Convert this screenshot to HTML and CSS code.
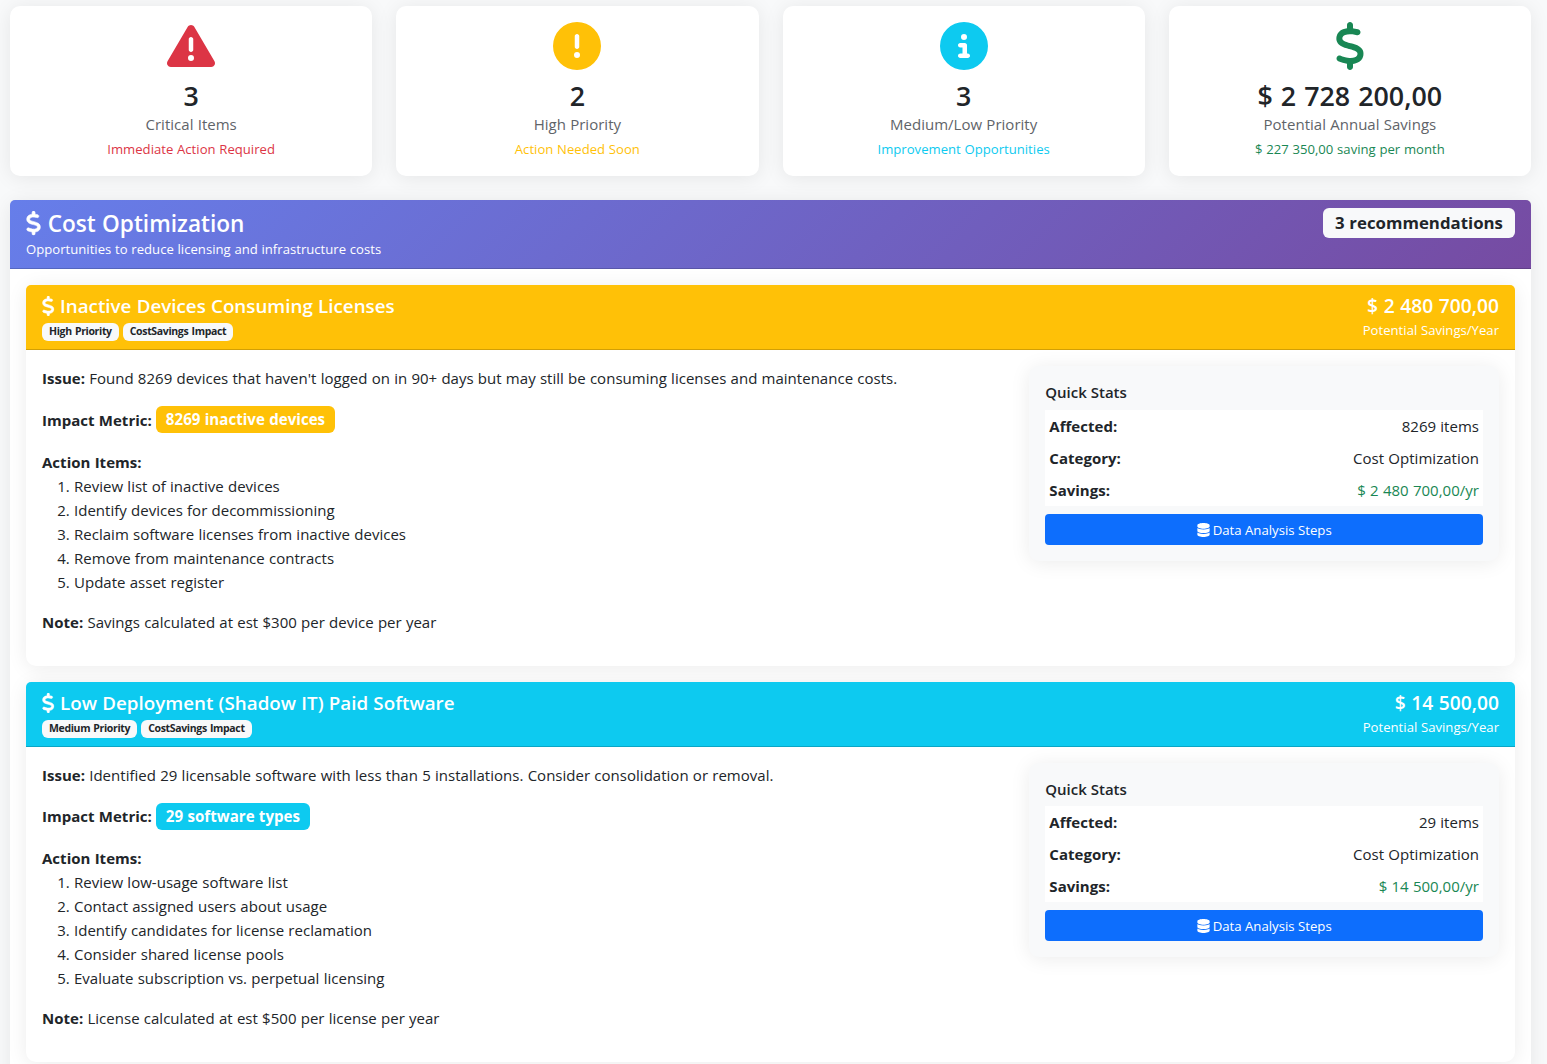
FILE: index.html
```html
<!DOCTYPE html>
<html lang="en">
<head>
    <meta charset="UTF-8">
    <meta name="viewport" content="width=device-width, initial-scale=1.0">
    <title>Recommendations</title>
    <link rel="stylesheet" href="styles.css">
</head>
<body>

<!-- Icons -->
<svg class="sprite" xmlns="http://www.w3.org/2000/svg">
    <symbol id="i-triangle" viewBox="0 0 512 512"><path d="M256 32c14.2 0 27.3 7.5 34.5 19.8l216 368c7.3 12.4 7.3 27.7 .2 40.1S486.3 480 472 480H40c-14.3 0-27.6-7.7-34.7-20.1s-7-27.8 .2-40.1l216-368C228.7 39.5 241.8 32 256 32zm0 128c-13.3 0-24 10.7-24 24V296c0 13.3 10.7 24 24 24s24-10.7 24-24V184c0-13.3-10.7-24-24-24zm32 224a32 32 0 1 0 -64 0 32 32 0 1 0 64 0z"/></symbol>
    <symbol id="i-exclamation" viewBox="0 0 512 512"><path d="M256 512A256 256 0 1 0 256 0a256 256 0 1 0 0 512zm0-384c13.3 0 24 10.7 24 24V264c0 13.3-10.7 24-24 24s-24-10.7-24-24V152c0-13.3 10.7-24 24-24zM224 352a32 32 0 1 1 64 0 32 32 0 1 1 -64 0z"/></symbol>
    <symbol id="i-info" viewBox="0 0 512 512"><path d="M256 512A256 256 0 1 0 256 0a256 256 0 1 0 0 512zM216 336h24V272H216c-13.3 0-24-10.7-24-24s10.7-24 24-24h48c13.3 0 24 10.7 24 24v88h8c13.3 0 24 10.7 24 24s-10.7 24-24 24H216c-13.3 0-24-10.7-24-24s10.7-24 24-24zm40-208a32 32 0 1 1 0 64 32 32 0 1 1 0-64z"/></symbol>
    <symbol id="i-dollar" viewBox="0 0 320 512"><path d="M160 0c17.7 0 32 14.3 32 32V67.7c1.6 .2 3.1 .4 4.7 .7c.4 .1 .7 .1 1.1 .2l48 8.8c17.4 3.2 28.9 19.9 25.7 37.2s-19.9 28.9-37.2 25.7l-47.5-8.7c-31.3-4.6-58.9-1.5-78.3 6.2s-27.2 18.3-29 28.1c-2 10.7-.5 16.7 1.2 20.4c1.8 3.9 5.5 8.3 12.8 13.2c16.3 10.7 41.3 17.7 73.7 26.3l2.9 .8c28.6 7.6 63.6 16.8 89.6 33.8c14.2 9.3 27.6 21.9 35.9 39.5c8.5 17.9 10.3 37.9 6.4 59.2c-6.9 38-33.1 63.4-65.6 76.7c-13.7 5.6-28.6 9.2-44.4 11V480c0 17.7-14.3 32-32 32s-32-14.3-32-32V445.1c-.4-.1-.9-.1-1.3-.2l-.2 0 0 0c-24.4-3.8-64.5-14.3-91.5-26.3c-16.1-7.2-23.4-26.1-16.2-42.2s26.1-23.4 42.2-16.2c20.9 9.3 55.3 18.5 75.2 21.6c31.9 4.7 58.2 2 76-5.3c16.9-6.9 24.6-16.9 26.8-28.9c1.9-10.6 .4-16.7-1.3-20.4c-1.9-4-5.6-8.4-13-13.3c-16.4-10.7-41.5-17.7-74-26.3l-2.8-.7 0 0C119.4 279.3 84.4 270 58.4 253c-14.2-9.3-27.5-22-35.8-39.6c-8.4-17.9-10.1-37.9-6.1-59.2C23.7 116 52.3 91.2 84.8 78.3c13.3-5.3 27.9-8.9 43.2-11V32c0-17.7 14.3-32 32-32z"/></symbol>
    <symbol id="i-database" viewBox="0 0 448 512"><path d="M448 80v48c0 44.2-100.3 80-224 80S0 172.2 0 128V80C0 35.8 100.3 0 224 0S448 35.8 448 80zM393.2 214.7c20.8-7.4 39.9-16.9 54.8-28.6V288c0 44.2-100.3 80-224 80S0 332.2 0 288V186.1c14.9 11.8 34 21.2 54.8 28.6C99.7 230.7 159.5 240 224 240s124.3-9.3 169.2-25.3zM0 346.1c14.9 11.8 34 21.2 54.8 28.6C99.7 390.7 159.5 400 224 400s124.3-9.3 169.2-25.3c20.8-7.4 39.9-16.9 54.8-28.6V432c0 44.2-100.3 80-224 80S0 476.2 0 432V346.1z"/></symbol>
</svg>

<div class="container">
    <!-- Summary cards -->
    <div class="summary">
        <div class="card summary-card">
            <svg class="icon-lg text-danger"><use href="#i-triangle"/></svg>
            <h3>3</h3>
            <p class="text-muted">Critical Items</p>
            <small class="text-danger">Immediate Action Required</small>
        </div>
        <div class="card summary-card">
            <svg class="icon-lg text-warning"><use href="#i-exclamation"/></svg>
            <h3>2</h3>
            <p class="text-muted">High Priority</p>
            <small class="text-warning">Action Needed Soon</small>
        </div>
        <div class="card summary-card">
            <svg class="icon-lg text-info"><use href="#i-info"/></svg>
            <h3>3</h3>
            <p class="text-muted">Medium/Low Priority</p>
            <small class="text-info">Improvement Opportunities</small>
        </div>
        <div class="card summary-card">
            <svg class="icon-lg text-success"><use href="#i-dollar"/></svg>
            <h3>$ 2 728 200,00</h3>
            <p class="text-muted">Potential Annual Savings</p>
            <small class="text-success">$ 227 350,00 saving per month</small>
        </div>
    </div>

    <!-- Cost Optimization -->
    <div class="card section">
        <div class="section-header">
            <div>
                <h4><svg class="icon-dollar"><use href="#i-dollar"/></svg>Cost Optimization</h4>
                <small>Opportunities to reduce licensing and infrastructure costs</small>
            </div>
            <span class="count-badge">3 recommendations</span>
        </div>
        <div class="section-body">

            <div class="card rec">
                <div class="rec-header bg-warning">
                    <div>
                        <h5><svg class="icon-dollar"><use href="#i-dollar"/></svg>Inactive Devices Consuming Licenses</h5>
                        <div class="tags">
                            <span class="tag">High Priority</span>
                            <span class="tag">CostSavings Impact</span>
                        </div>
                    </div>
                    <div class="rec-savings">
                        <h5>$ 2 480 700,00</h5>
                        <small>Potential Savings/Year</small>
                    </div>
                </div>
                <div class="rec-body">
                    <div class="rec-text">
                        <p><strong>Issue:</strong> Found 8269 devices that haven't logged on in 90+ days but may still be consuming licenses and maintenance costs.</p>
                        <div class="metric"><strong>Impact Metric:</strong><span class="metric-badge bg-warning">8269 inactive devices</span></div>
                        <strong>Action Items:</strong>
                        <ol>
                            <li>Review list of inactive devices</li>
                            <li>Identify devices for decommissioning</li>
                            <li>Reclaim software licenses from inactive devices</li>
                            <li>Remove from maintenance contracts</li>
                            <li>Update asset register</li>
                        </ol>
                        <p><strong>Note:</strong> Savings calculated at est $300 per device per year</p>
                    </div>
                    <div class="card stats">
                        <h6>Quick Stats</h6>
                        <table>
                            <tr><th>Affected:</th><td>8269 items</td></tr>
                            <tr><th>Category:</th><td>Cost Optimization</td></tr>
                            <tr><th>Savings:</th><td class="text-success">$ 2 480 700,00/yr</td></tr>
                        </table>
                        <button class="btn"><svg class="icon-db"><use href="#i-database"/></svg>Data Analysis Steps</button>
                    </div>
                </div>
            </div>

            <div class="card rec">
                <div class="rec-header bg-info">
                    <div>
                        <h5><svg class="icon-dollar"><use href="#i-dollar"/></svg>Low Deployment (Shadow IT) Paid Software</h5>
                        <div class="tags">
                            <span class="tag">Medium Priority</span>
                            <span class="tag">CostSavings Impact</span>
                        </div>
                    </div>
                    <div class="rec-savings">
                        <h5>$ 14 500,00</h5>
                        <small>Potential Savings/Year</small>
                    </div>
                </div>
                <div class="rec-body">
                    <div class="rec-text">
                        <p><strong>Issue:</strong> Identified 29 licensable software with less than 5 installations. Consider consolidation or removal.</p>
                        <div class="metric"><strong>Impact Metric:</strong><span class="metric-badge bg-info">29 software types</span></div>
                        <strong>Action Items:</strong>
                        <ol>
                            <li>Review low-usage software list</li>
                            <li>Contact assigned users about usage</li>
                            <li>Identify candidates for license reclamation</li>
                            <li>Consider shared license pools</li>
                            <li>Evaluate subscription vs. perpetual licensing</li>
                        </ol>
                        <p><strong>Note:</strong> License calculated at est $500 per license per year</p>
                    </div>
                    <div class="card stats">
                        <h6>Quick Stats</h6>
                        <table>
                            <tr><th>Affected:</th><td>29 items</td></tr>
                            <tr><th>Category:</th><td>Cost Optimization</td></tr>
                            <tr><th>Savings:</th><td class="text-success">$ 14 500,00/yr</td></tr>
                        </table>
                        <button class="btn"><svg class="icon-db"><use href="#i-database"/></svg>Data Analysis Steps</button>
                    </div>
                </div>
            </div>

        </div>
    </div>
</div>

</body>
</html>
```
FILE: styles.css
```css
* {
    box-sizing: border-box;
}
html {
    height: 100%;
    overflow: hidden;
}
body {
    margin: 0;
    height: 100%;
    overflow: hidden;
    font-family: "Open Sans", "Noto Sans", sans-serif;
    font-size: 15px;
    line-height: 24px;
    letter-spacing: 0.02px;
    word-spacing: 0.3px;
    color: #212529;
    background-color: #f8f9fa;
}
.sprite {
    display: none;
}
svg {
    fill: currentColor;
}
h3, h4, h5, h6, p {
    margin: 0;
}
h3, h4, h5, h6 {
    font-weight: 600;
    line-height: 1.2;
}
small {
    display: block;
    font-size: 13.1px;
}
strong {
    font-weight: 700;
}
.text-danger { color: #dc3545; }
.text-warning { color: #ffc107; }
.text-info { color: #0dcaf0; }
.text-success { color: #198754; }
.text-muted { color: #5f6469; }
.bg-warning { background-color: #ffc107; }
.bg-info { background-color: #0dcaf0; }

.container {
    padding: 6px 16px 24px 10px;
}
.card {
    background-color: #fff;
    border-radius: 10px;
    box-shadow: 0 2px 20px rgba(0, 0, 0, 0.08);
}

/* Summary cards */
.summary {
    display: grid;
    grid-template-columns: repeat(4, 1fr);
    gap: 24px;
    margin-bottom: 24px;
}
.summary-card {
    height: 170px;
    padding: 16px;
    text-align: center;
}
.icon-lg {
    display: block;
    width: 48px;
    height: 48px;
    margin: 0 auto 8px;
}
h3 {
    font-size: 26.8px;
    line-height: 34px;
    padding-top: 1px;
    margin-bottom: -1px;
    word-spacing: 1px;
}
.summary-card small {
    padding-top: 1px;
}

/* Section */
.section-header {
    display: flex;
    justify-content: space-between;
    align-items: flex-start;
    height: 69px;
    padding: 8px 16px;
    color: #fff;
    background: linear-gradient(135deg, #667eea 0%, #764ba2 100%);
    border-bottom: 1px solid rgba(0, 0, 0, 0.176);
    border-radius: 5px 5px 0 0;
}
h4 {
    font-size: 22.6px;
    line-height: 31px;
    margin-bottom: -2px;
}
.icon-dollar {
    width: 0.67em;
    height: 1.07em;
    margin-right: 0.29em;
    vertical-align: -0.16em;
    stroke: currentColor;
    stroke-width: 12px;
    overflow: visible;
}
.count-badge {
    height: 30px;
    padding: 0 12px;
    font-size: 16.8px;
    font-weight: 700;
    line-height: 30px;
    color: #212529;
    background-color: #f8f9fa;
    border-radius: 6px;
}
.section-body {
    padding: 16px;
}

/* Recommendation */
.rec {
    margin-bottom: 16px;
}
.rec-header {
    display: flex;
    justify-content: space-between;
    height: 65px;
    padding: 8px 16px;
    color: #fff;
    border-bottom: 1px solid rgba(0, 0, 0, 0.176);
    border-radius: 5px 5px 0 0;
}
h5 {
    font-size: 18.75px;
    line-height: 25px;
}
.tags {
    display: flex;
    gap: 4px;
    padding-top: 5px;
}
.tag {
    height: 18px;
    padding: 0 7px;
    font-size: 10.5px;
    font-weight: 700;
    line-height: 17px;
    letter-spacing: -0.34px;
    word-spacing: 0.8px;
    color: #212529;
    background-color: #f8f9fa;
    border-radius: 6px;
}
.rec-savings {
    text-align: right;
}
.rec-savings h5 {
    font-size: 19.2px;
    word-spacing: 0.6px;
}
.rec-body {
    display: grid;
    grid-template-columns: 1fr 469.66px;
    gap: 24px;
    align-items: start;
    padding: 16px;
}
.rec-text p {
    margin-bottom: 16px;
}
.metric {
    display: flex;
    align-items: center;
    gap: 4px;
    height: 27.6px;
    margin-bottom: 16px;
}
.metric-badge {
    height: 27.2px;
    padding: 0 10px;
    font-size: 15.1px;
    font-weight: 700;
    line-height: 27.2px;
    color: #fff;
    border-radius: 6px;
}
ol {
    margin: 0 0 16px;
    padding-left: 32px;
}

/* Quick Stats */
.stats {
    padding: 16px;
    background-color: #f8f9fa;
}
h6 {
    padding-top: 1px;
    margin-bottom: 8px;
    font-size: 15px;
    line-height: 18.6px;
    letter-spacing: -0.04px;
}
table {
    width: 100%;
    margin-bottom: 8px;
    border-collapse: collapse;
    background-color: #fff;
}
th, td {
    padding: 4px;
}
th {
    text-align: left;
}
td {
    text-align: right;
}
.btn {
    display: flex;
    justify-content: center;
    align-items: center;
    gap: 3px;
    width: 100%;
    height: 31px;
    padding: 1px 0 0;
    font-family: inherit;
    font-size: 13.2px;
    color: #fff;
    background-color: #0d6efd;
    border: none;
    border-radius: 4px;
}
.icon-db {
    width: 13px;
    height: 14px;
}
```
